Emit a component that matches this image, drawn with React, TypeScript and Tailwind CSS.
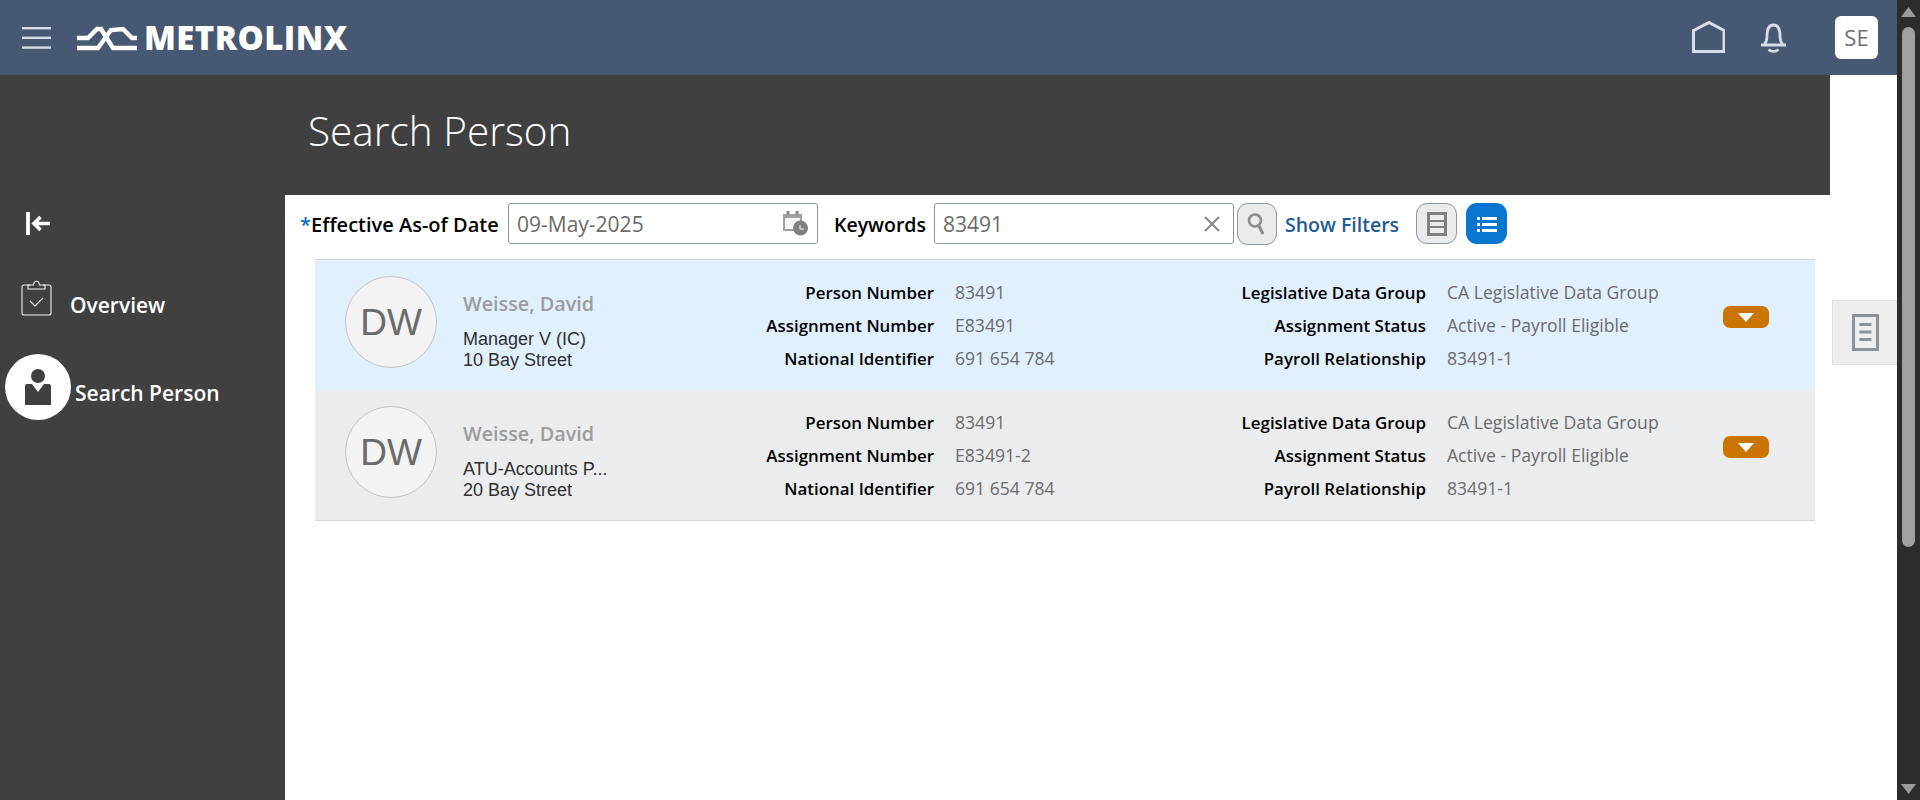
const sans = "font-['Open_Sans','Noto_Sans',sans-serif]";

function Row({ bg, job, addr, assign }: { bg: string; job: string; addr: string; assign: string }) {
  const Label = ({ children }: { children: string }) => (
    <div className="h-[33px] leading-[33px] text-right text-[16.9px] font-semibold whitespace-nowrap text-black">{children}</div>
  );
  const Value = ({ children }: { children: string }) => (
    <div className="h-[33px] leading-[33px] text-[17.6px] whitespace-nowrap text-[#6b6b6b]">{children}</div>
  );
  return (
    <div className={`flex h-[130px] pl-[30px] pt-4 ${bg}`}>
      <div className="flex h-[92px] w-[92px] shrink-0 items-center justify-center rounded-full border border-[#c4c4c4] bg-[#f3f3f3] pt-[2px] font-['Liberation_Sans',sans-serif] text-[37px] text-[#6b6b6b]">
        DW
      </div>
      <div className="ml-[26px] w-[180px] shrink-0 pt-[14px]">
        <div className="text-[19.800px] leading-[28px] font-semibold text-[#9c9c9c]">Weisse, David</div>
        <div className="mt-[11px] font-['Liberation_Sans',sans-serif] text-[18px] leading-[21px] text-[#303030]">
          <div>{job}</div>
          <div>{addr}</div>
        </div>
      </div>
      <div className="ml-[-3px] flex w-[294px] shrink-0 justify-end">
        <div>
          <Label>Person Number</Label>
          <Label>Assignment Number</Label>
          <Label>National Identifier</Label>
        </div>
      </div>
      <div className="ml-[21px] w-[200px] shrink-0">
        <Value>83491</Value>
        <Value>{assign}</Value>
        <Value>691 654 784</Value>
      </div>
      <div className="flex w-[271px] shrink-0 justify-end">
        <div>
          <Label>Legislative Data Group</Label>
          <Label>Assignment Status</Label>
          <Label>Payroll Relationship</Label>
        </div>
      </div>
      <div className="ml-[21px] w-[276px] shrink-0">
        <Value>CA Legislative Data Group</Value>
        <Value>Active - Payroll Eligible</Value>
        <Value>83491-1</Value>
      </div>
      <div className="mt-[30px] flex h-[22px] w-[46px] shrink-0 items-center justify-center rounded-[7px] bg-[#c97500]">
        <svg width="16" height="9" viewBox="0 0 16 9"><path d="M0 0h16L8 9z" fill="#fff" /></svg>
      </div>
    </div>
  );
}

export default function App() {
  return (
    <div className={`flex h-[800px] w-[1920px] overflow-hidden bg-white ${sans}`}>
      <div className="flex w-[1897px] shrink-0 flex-col">
        <header className="flex h-[75px] shrink-0 items-center bg-[#465872]">
          <svg className="ml-[22px]" width="29" height="22" viewBox="0 0 29 22" fill="#d5deea">
            <rect y="0" width="29" height="2.4" />
            <rect y="9.6" width="29" height="2.4" />
            <rect y="19.4" width="29" height="2.4" />
          </svg>
          <svg className="ml-[25px]" width="62" height="28" viewBox="6 2 62 28" fill="none" stroke="#fff" strokeWidth="4.400">
            <path d="M7 16h11l9-9h4l12 19h24" />
            <path d="M7 26h21l13-18 12-1 9 9h5" />
          </svg>
          <div className="ml-[6px] font-['Open_Sans',sans-serif] text-[33px] leading-none font-extrabold tracking-[0.4px] text-white">METROLINX</div>
          <div className="ml-auto flex items-center">
            <svg width="33" height="33" viewBox="0 0 33 33" fill="none" stroke="#d5deea" strokeWidth="3">
              <path d="M1.500 9.500 17 1.500l15 8v21H1.500z" />
            </svg>
            <svg className="ml-[35px]" width="27" height="31" viewBox="0 0 27 31" fill="none" stroke="#d5deea" strokeWidth="2.800">
              <path d="M1 23h25M4.500 22c2-2 2.500-4 2.500-8 0-7 2.500-11 6.500-11s6.500 4 6.500 11c0 4 .5 6 2.500 8" />
              <path d="M8.500 27.500c3 2.500 7 2.500 10 0" />
            </svg>
            <div className="ml-[48px] mr-[19px] flex h-[43px] w-[43px] items-center justify-center rounded-[6px] bg-white text-[22px] text-[#707070]">SE</div>
          </div>
        </header>
        <div className="flex min-h-0 flex-1">
          <aside className="w-[285px] shrink-0 bg-[#404040] text-white">
            <svg className="ml-[26px] mt-[137px]" width="25" height="23" viewBox="0 0 25 23" fill="none" stroke="#fff">
              <path d="M2 0v23" strokeWidth="3.800" />
              <path d="M24 11.500H8M14.500 5 8 11.500l6.500 6.500" strokeWidth="3.600" />
            </svg>
            <div className="ml-[21px] mt-[44px] flex h-[37px] items-center">
              <svg width="31" height="37" viewBox="0 0 31 37" fill="none" stroke="#f0f0f0" strokeWidth="1.100">
                <path d="M9 6H3a2 2 0 0 0-2 2v26a2 2 0 0 0 2 2h25a2 2 0 0 0 2-2V8a2 2 0 0 0-2-2h-6" />
                <path d="M7 10V6h5.500c.5-5 5.500-5 6 0H24v4z" />
                <path d="m9 22 5 5 8-8" />
              </svg>
              <span className="ml-[18px] mt-[17px] text-[21px] font-semibold">Overview</span>
            </div>
            <div className="ml-[5px] mt-[38px] flex h-[66px] items-center">
              <div className="flex h-[66px] w-[66px] shrink-0 items-center justify-center rounded-full bg-white">
                <svg width="26" height="36" viewBox="0 0 26 36" fill="#404040">
                  <circle cx="13" cy="7" r="7" />
                  <path d="M0 17a2 2 0 0 1 2-2h5l6 8 6-8h5a2 2 0 0 1 2 2v19H0z" />
                </svg>
              </div>
              <span className="ml-[4px] mt-[14px] text-[21px] font-semibold">Search Person</span>
            </div>
          </aside>
          <main className="flex w-[1545px] shrink-0 flex-col">
            <div className="flex h-[120px] shrink-0 items-center bg-[#404040] pb-[8px] pl-[23px] text-[40.500px] leading-none font-light text-white">
              Search Person
            </div>
            <div className="flex h-[50px] shrink-0 items-end pb-[1px] pl-[15px]">
              <div className="flex h-[41px] w-full items-center">
                <span className="w-[208px] shrink-0 pt-[2px] text-[20px] font-semibold whitespace-nowrap text-black">
                  <span className="text-[#0a6ebd]">*</span>Effective As-of Date
                </span>
                <div className="flex h-[41px] w-[310px] shrink-0 items-center justify-between rounded-[3px] border border-[#8a97a3] pr-[8px] pl-[8px] text-[21px] text-[#6b6b6b]">
                  <span className="pt-[2px]">09-May-2025</span>
                  <svg width="26" height="27" viewBox="0 0 26 27">
                    <path d="M1 5h17v15H1z" fill="#f5f5f5" stroke="#a0a0a0" strokeWidth="2" />
                    <path d="M5 1v5M14 1v5" stroke="#8a8a8a" strokeWidth="3" />
                    <path d="M1 5h17v3H1z" fill="#a0a0a0" />
                    <circle cx="17.500" cy="18" r="7.500" fill="#808080" />
                    <path d="M17 15v4l4 0" stroke="#fff" strokeWidth="1" fill="none" />
                  </svg>
                </div>
                <span className="ml-[16px] w-[100px] shrink-0 pt-[2px] text-[19.500px] font-semibold text-black">Keywords</span>
                <div className="flex h-[41px] w-[300px] shrink-0 items-center justify-between rounded-[3px] border border-[#8a97a3] pr-[13px] pl-[8px] text-[21px] text-[#6b6b6b]">
                  <span className="pt-[2px]">83491</span>
                  <svg width="16" height="16" viewBox="0 0 16 16" stroke="#8c8c8c" strokeWidth="2.200"><path d="M1 1l14 14M15 1 1 15" /></svg>
                </div>
                <div className="ml-[3px] flex h-[42px] w-[40px] shrink-0 items-center justify-center rounded-[11px] border border-[#8a97a3] bg-[#e9ebed]">
                  <svg width="20" height="24" viewBox="0 0 20 24" fill="none" stroke="#8c8c8c">
                    <circle cx="8" cy="8.500" r="6" strokeWidth="2.600" />
                    <path d="m12 14 4 8" strokeWidth="3" />
                  </svg>
                </div>
                <span className="ml-[8px] w-[131px] shrink-0 pt-[2px] text-[19.500px] font-semibold whitespace-nowrap text-[#1f5b94]">Show Filters</span>
                <div className="flex h-[41px] w-[41px] shrink-0 items-center justify-center rounded-[11px] border border-[#8a97a3] bg-[#e9ebed]">
                  <svg width="20" height="24" viewBox="0 0 20 24" fill="#7f7f7f">
                    <path d="M0 0h20v24H0z M3 3v5h14V3z M3 10v4h14v-4z M3 16v5h14v-5z" fillRule="evenodd" />
                  </svg>
                </div>
                <div className="ml-[9px] flex h-[41px] w-[41px] shrink-0 items-center justify-center rounded-[11px] bg-[#0875d1]">
                  <svg width="20" height="16" viewBox="0 0 20 16" fill="#fff">
                    <rect x="0" y="1" width="3" height="3" /><rect x="5" y="1" width="15" height="3" />
                    <rect x="0" y="7" width="3" height="3" /><rect x="5" y="7" width="15" height="3" />
                    <rect x="0" y="13" width="3" height="3" /><rect x="5" y="13" width="15" height="3" />
                  </svg>
                </div>
              </div>
            </div>
            <div className="ml-[30px] mt-[14px] w-[1500px] border-t border-[#cfd3d8]">
              <Row bg="bg-[#e1f0fe]" job="Manager V (IC)" addr="10 Bay Street" assign="E83491" />
              <div className="border-b border-[#d5d7da]">
                <Row bg="bg-[#ebecee]" job="ATU-Accounts P..." addr="20 Bay Street" assign="E83491-2" />
              </div>
            </div>
          </main>
          <div className="flex-1 pt-[225px] pl-[2px]">
            <div className="flex h-[65px] items-center justify-center border border-r-0 border-[#dbe0e6] bg-[#eeeeee]">
              <svg width="27" height="37" viewBox="0 0 27 37" fill="none" stroke="#8c9296">
                <path d="M1.500 1.500h24v34h-24z" strokeWidth="3" />
                <path d="M7.500 10.500h12M7.500 18h12M7.500 25.500h12" strokeWidth="3" />
              </svg>
            </div>
          </div>
        </div>
      </div>
      <div className="flex w-[23px] shrink-0 flex-col items-center bg-[#2c2c2c]">
        <svg className="mt-[7px]" width="15" height="10" viewBox="0 0 15 10"><path d="M7.500 0 15 10H0z" fill="#9a9a9a" /></svg>
        <div className="mt-[10px] h-[520px] w-[13px] rounded-full bg-[#9f9f9f]" />
        <svg className="mt-auto mb-[6px]" width="15" height="10" viewBox="0 0 15 10"><path d="M0 0h15L7.500 10z" fill="#9a9a9a" /></svg>
      </div>
    </div>
  );
}
